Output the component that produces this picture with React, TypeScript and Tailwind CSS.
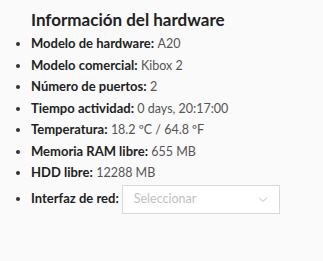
import React from 'react';

const rows: { label: string; value: string }[] = [
  { label: 'Modelo de hardware:', value: 'A20' },
  { label: 'Modelo comercial:', value: 'Kibox 2' },
  { label: 'Número de puertos:', value: '2' },
  { label: 'Tiempo actividad:', value: '0 days, 20:17:00' },
  { label: 'Temperatura:', value: '18.2 ºC / 64.8 ºF' },
  { label: 'Memoria RAM libre:', value: '655 MB' },
  { label: 'HDD libre:', value: '12288 MB' },
];

export default function App() {
  return (
    <div className="min-h-[261px] bg-[#fafafa] pt-[7px] text-[#333] font-['Lato',sans-serif]">
      <h3 className="pl-[31px] text-[17px] font-bold leading-[26px] text-[#222]">Información del hardware</h3>
      <ul className="list-disc pl-[31px] text-[13px] leading-[21.5px]">
        {rows.map((r) => (
          <li key={r.label}>
            <span className="font-bold text-[#222]">{r.label}</span>{' '}
            <span className="text-[12.5px] text-[#555]">{r.value}</span>
          </li>
        ))}
        <li className="mt-[1px]">
          <div className="flex items-center gap-[3px]">
            <span className="font-bold text-[#222]">Interfaz de red:</span>
            <div className="flex h-[29px] w-[158px] items-center justify-between border border-[#d9d9d9] bg-white pl-[11px] pr-[10px]">
              <span className="text-[12.5px] text-[#bfbfbf]">Seleccionar</span>
              <svg width="12" height="12" viewBox="0 0 12 12" fill="none" stroke="#bfbfbf" strokeWidth="1">
                <path d="M2 4.5l4 4 4-4" />
              </svg>
            </div>
          </div>
        </li>
      </ul>
    </div>
  );
}
